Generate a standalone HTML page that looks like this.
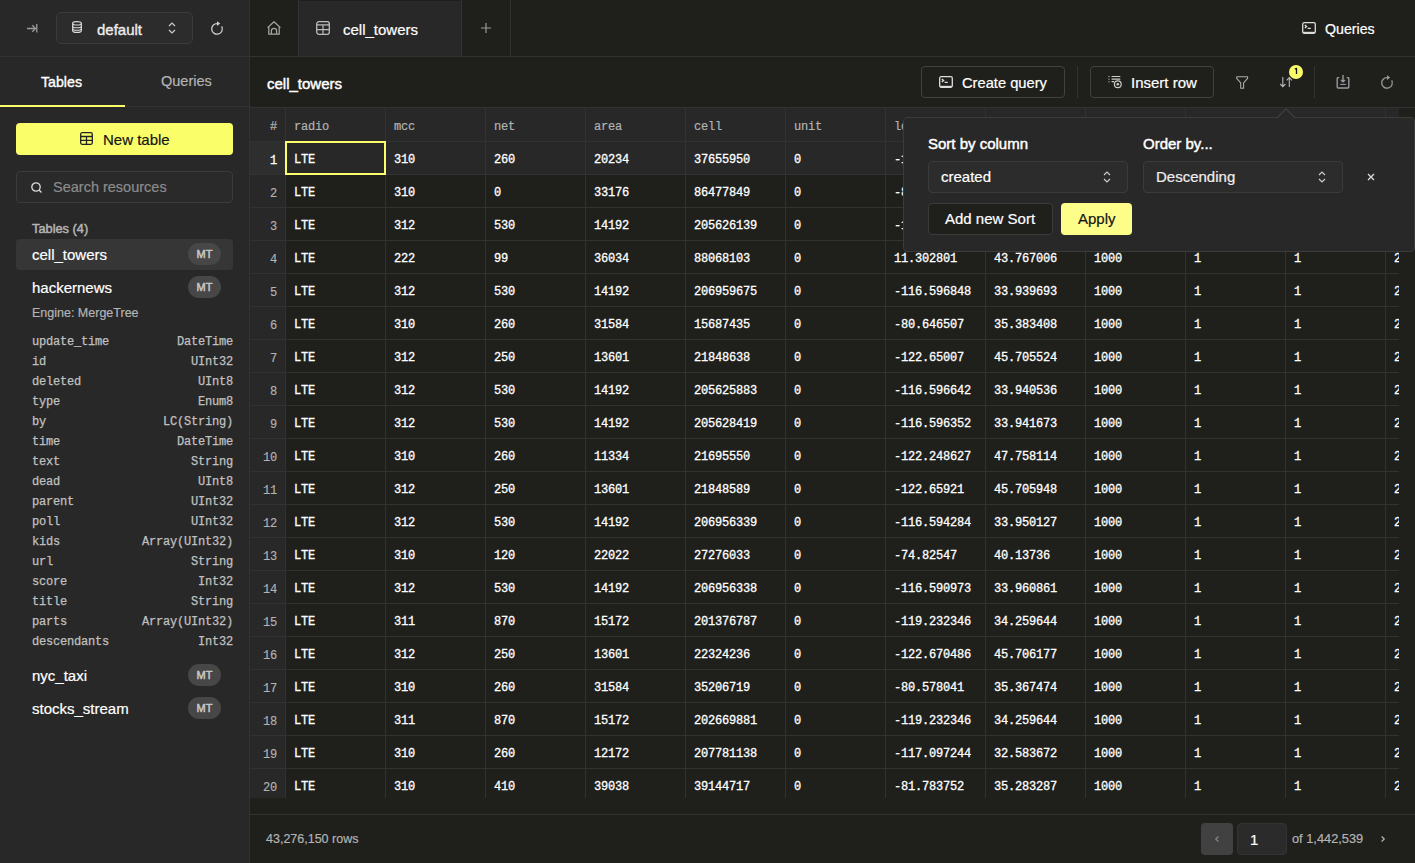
<!DOCTYPE html>
<html><head><meta charset="utf-8">
<style>
*{margin:0;padding:0;box-sizing:border-box}
html,body{width:1415px;height:863px;overflow:hidden;background:#1f1f1c;font-family:"Liberation Sans",sans-serif;color:#fff}
.abs{position:absolute}
svg{position:absolute;overflow:visible}
#side{position:absolute;left:0;top:0;width:250px;height:863px;background:#282828;border-right:1px solid #323232}
.hline{position:absolute;height:1px;background:#323232}
.vline{position:absolute;width:1px;background:#323232}
.txt{position:absolute;white-space:nowrap;line-height:1;-webkit-text-stroke:0.2px currentColor}
.txt.med{-webkit-text-stroke:0.35px currentColor}
.sel-box{position:absolute;border:1px solid #3b3b3b;border-radius:6px;background:#2c2c2c}
.btn{position:absolute;border:1px solid #414141;border-radius:4px}
.badge{position:absolute;left:188px;width:33px;height:22px;border-radius:11px;background:#474747;color:#c8c8c8;font-size:11px;text-align:center;line-height:22px;-webkit-text-stroke:0.5px #c8c8c8}
.srow{position:absolute;left:32px;width:201px;height:20px;display:flex;justify-content:space-between;font-family:"Liberation Mono",monospace;font-size:12px;color:#c0c0c0;line-height:20px;letter-spacing:-0.2px;-webkit-text-stroke:0.25px #c0c0c0}
/* grid */
#grid{position:absolute;left:250px;top:108px;width:1149px;height:690px;overflow:hidden}
.hrow{position:absolute;left:0;top:0;width:1400px;height:34px;background:#282828;border-bottom:1px solid #323232}
.row{position:absolute;left:0;width:1400px;height:33px;border-bottom:1px solid #323232}
.row.sel{background:#282828}
.hc,.c{position:absolute;top:0;width:100px;height:100%;border-left:1px solid #323232;padding-left:8px;font-family:"Liberation Mono",monospace;font-size:12px;letter-spacing:-0.2px;white-space:nowrap}
.hc{color:#b3b3b3;line-height:34px;padding-top:2px;-webkit-text-stroke:0.2px #b3b3b3}
.c{color:#fff;line-height:33px;padding-top:2px;-webkit-text-stroke:0.3px #fff}
.num{left:0;width:35px;border-left:none;padding-left:0;padding-right:8px;text-align:right;background:#282828}
.c.num{color:#b3b3b3;-webkit-text-stroke:0.15px #b3b3b3;padding-top:3px}
.sel .c.num{color:#fff;background:#2e2e2e;-webkit-text-stroke:0.3px #fff}
</style></head>
<body>
<!-- SIDEBAR -->
<div id="side">
  <div class="hline" style="left:0;top:56px;width:249px"></div>
  <!-- collapse icon -->
  <svg style="left:27px;top:24px" width="11" height="9" viewBox="0 0 11 9"><path d="M0 4.5H8.5M5.3 1.3L8.5 4.5L5.3 7.7" stroke="#9a9a9a" stroke-width="1.3" fill="none"/><path d="M9.8 0V8.5" stroke="#b0b0b0" stroke-width="1.1"/></svg>
  <div class="sel-box" style="left:56px;top:12px;width:137px;height:32px;border-radius:5px"></div>
  <svg style="left:72px;top:21px" width="10" height="12" viewBox="0 0 10 12"><path d="M0.7 2.3C0.7 1.2 2.6 0.6 5 0.6S9.3 1.2 9.3 2.3V9.7C9.3 10.8 7.4 11.4 5 11.4S0.7 10.8 0.7 9.7Z" stroke="#ddd" stroke-width="1.2" fill="none"/><path d="M0.7 2.5C0.7 3.5 2.6 4 5 4S9.3 3.5 9.3 2.5M0.7 5.2C0.7 6.2 2.6 6.7 5 6.7S9.3 6.2 9.3 5.2M0.7 7.8C0.7 8.8 2.6 9.3 5 9.3S9.3 8.8 9.3 7.8" stroke="#ddd" stroke-width="1.1" fill="none"/></svg>
  <div class="txt med" style="left:97px;top:22px;font-size:15px;color:#eee">default</div>
  <svg style="left:168px;top:22px" width="8" height="12" viewBox="0 0 8 12"><path d="M1 4L4 1L7 4M1 8L4 11L7 8" stroke="#ccc" stroke-width="1.2" fill="none"/></svg>
  <svg style="left:211px;top:21px" width="13" height="14" viewBox="0 0 13 14"><path d="M10.7 5.4A5.3 5.3 0 1 1 6.3 2.6" stroke="#ccc" stroke-width="1.3" fill="none"/><path d="M6 0.2L9.2 2.6L6 5Z" fill="#ccc"/></svg>

  <!-- tabs -->
  <div class="txt med" style="left:41px;top:75px;font-size:14.2px;color:#fff">Tables</div>
  <div class="txt" style="left:161px;top:74px;font-size:14.5px;color:#b3b3b3">Queries</div>
  <div class="hline" style="left:0;top:106px;width:249px"></div>
  <div class="abs" style="left:0;top:105px;width:125px;height:2px;background:#faff69"></div>

  <!-- new table -->
  <div class="abs" style="left:16px;top:123px;width:217px;height:32px;background:#faff69;border-radius:4px"></div>
  <svg style="left:80px;top:132px" width="13" height="13" viewBox="0 0 13 13"><rect x="0.7" y="0.7" width="11.6" height="11.6" rx="1.5" stroke="#222" stroke-width="1.3" fill="none"/><path d="M0.7 4.5H12.3M0.7 8.3H12.3M6.5 4.5V12.3" stroke="#222" stroke-width="1.3"/></svg>
  <div class="txt" style="left:103px;top:132px;font-size:15px;color:#151515">New table</div>

  <!-- search -->
  <div class="abs" style="left:16px;top:171px;width:217px;height:32px;border:1px solid #3b3b3b;border-radius:4px;background:#2a2a2a"></div>
  <svg style="left:31px;top:182px" width="11" height="11" viewBox="0 0 11 11"><circle cx="5" cy="5" r="4.2" stroke="#ddd" stroke-width="1.3" fill="none"/><path d="M8 8L10.5 10.5" stroke="#ddd" stroke-width="1.3"/></svg>
  <div class="txt" style="left:53px;top:180px;font-size:14.5px;color:#8c8c8c">Search resources</div>

  <div class="txt med" style="left:32px;top:223px;font-size:12.8px;color:#b3b3b3;-webkit-text-stroke-width:0.5px">Tables (4)</div>

  <div class="abs" style="left:16px;top:239px;width:217px;height:31px;background:#363636;border-radius:4px"></div>
  <div class="txt" style="left:32px;top:247px;font-size:15px;color:#fff">cell_towers</div>
  <div class="badge" style="top:243px">MT</div>

  <div class="txt" style="left:32px;top:280px;font-size:15px;color:#fff">hackernews</div>
  <div class="badge" style="top:276px">MT</div>
  <div class="txt" style="left:32px;top:307px;font-size:12.5px;color:#b3b3b3">Engine: MergeTree</div>

  <div class="srow" style="top:332px"><span>update_time</span><span>DateTime</span></div>
<div class="srow" style="top:352px"><span>id</span><span>UInt32</span></div>
<div class="srow" style="top:372px"><span>deleted</span><span>UInt8</span></div>
<div class="srow" style="top:392px"><span>type</span><span>Enum8</span></div>
<div class="srow" style="top:412px"><span>by</span><span>LC(String)</span></div>
<div class="srow" style="top:432px"><span>time</span><span>DateTime</span></div>
<div class="srow" style="top:452px"><span>text</span><span>String</span></div>
<div class="srow" style="top:472px"><span>dead</span><span>UInt8</span></div>
<div class="srow" style="top:492px"><span>parent</span><span>UInt32</span></div>
<div class="srow" style="top:512px"><span>poll</span><span>UInt32</span></div>
<div class="srow" style="top:532px"><span>kids</span><span>Array(UInt32)</span></div>
<div class="srow" style="top:552px"><span>url</span><span>String</span></div>
<div class="srow" style="top:572px"><span>score</span><span>Int32</span></div>
<div class="srow" style="top:592px"><span>title</span><span>String</span></div>
<div class="srow" style="top:612px"><span>parts</span><span>Array(UInt32)</span></div>
<div class="srow" style="top:632px"><span>descendants</span><span>Int32</span></div>

  <div class="txt" style="left:32px;top:668px;font-size:15px;color:#fff">nyc_taxi</div>
  <div class="badge" style="top:664px">MT</div>
  <div class="txt" style="left:32px;top:701px;font-size:15px;color:#fff">stocks_stream</div>
  <div class="badge" style="top:697px">MT</div>
</div>

<!-- TAB BAR -->
<div class="abs" style="left:299px;top:1px;width:162px;height:55px;background:#282828"></div>
<div class="vline" style="left:298px;top:0;height:56px"></div>
<div class="vline" style="left:461px;top:0;height:56px"></div>
<div class="vline" style="left:510px;top:0;height:56px"></div>
<div class="hline" style="left:250px;top:56px;width:1165px"></div>
<svg style="left:267px;top:21px" width="14" height="14" viewBox="0 0 14 14"><path d="M0.6 6.6L7 0.8L13.4 6.6M1.8 5.6V13.2H12.2V5.6M4.4 13.2V9.9A2.6 2.6 0 0 1 9.6 9.9V13.2" stroke="#a5a5a5" stroke-width="1.25" fill="none" stroke-linejoin="round"/></svg>
<svg style="left:316px;top:21px" width="14" height="14" viewBox="0 0 14 14"><rect x="0.7" y="0.7" width="12.6" height="12.6" rx="2.2" stroke="#bbb" stroke-width="1.3" fill="none"/><path d="M0.7 3.9H13.3M0.7 8.6H13.3M7 3.9V13.3" stroke="#bbb" stroke-width="1.2"/></svg>
<div class="txt" style="left:343px;top:22px;font-size:15px;color:#fff">cell_towers</div>
<svg style="left:481px;top:23px" width="10" height="10" viewBox="0 0 10 10"><path d="M5 0V10M0 5H10" stroke="#9a9a9a" stroke-width="1.2"/></svg>

<svg style="left:1302px;top:22px" width="14" height="12" viewBox="0 0 14 12"><rect x="0.7" y="0.7" width="12.6" height="10.6" rx="1.5" stroke="#ddd" stroke-width="1.3" fill="none"/><path d="M1.2 10.6H12.8" stroke="#ddd" stroke-width="1.6"/><path d="M2.8 3L4.6 4.5L2.8 6M5.6 6.3H8.8" stroke="#ddd" stroke-width="1.3" fill="none"/></svg>
<div class="txt" style="left:1325px;top:22px;font-size:14.2px;color:#fff">Queries</div>

<!-- TOOLBAR -->
<div class="txt med" style="left:267px;top:76px;font-size:15px;color:#fff;-webkit-text-stroke-width:0.45px">cell_towers</div>
<div class="btn" style="left:921px;top:66px;width:144px;height:32px"></div>
<svg style="left:939px;top:76px" width="14" height="12" viewBox="0 0 14 12"><rect x="0.7" y="0.7" width="12.6" height="10.6" rx="1.5" stroke="#ddd" stroke-width="1.3" fill="none"/><path d="M1.2 10.6H12.8" stroke="#ddd" stroke-width="1.6"/><path d="M2.8 3L4.6 4.5L2.8 6M5.6 6.3H8.8" stroke="#ddd" stroke-width="1.3" fill="none"/></svg>
<div class="txt" style="left:962px;top:76px;font-size:14.7px;color:#fff">Create query</div>
<div class="vline" style="left:1077px;top:66px;height:32px"></div>
<div class="btn" style="left:1090px;top:66px;width:124px;height:32px"></div>
<svg style="left:1108px;top:75px" width="15" height="14" viewBox="0 0 15 14"><rect x="0.4" y="1" width="1.1" height="1.1" fill="#bbb"/><rect x="0.4" y="3.6" width="1.1" height="1.1" fill="#bbb"/><rect x="0.4" y="6.2" width="1.1" height="1.1" fill="#bbb"/><path d="M3.6 1.5H12.3M3.6 4.1H12.3M3.6 6.7H6" stroke="#ccc" stroke-width="1.2"/><circle cx="9.8" cy="9.3" r="3.4" stroke="#ccc" stroke-width="1.2" fill="none"/><circle cx="9.8" cy="9.3" r="1.3" fill="#ccc"/></svg>
<div class="txt" style="left:1131px;top:75px;font-size:15px;color:#fff">Insert row</div>
<svg style="left:1236px;top:76px" width="13" height="13" viewBox="0 0 13 13"><path d="M0.7 0.7H11.6V2.3L7.6 6.8V12.2H4.7V6.8L0.7 2.3Z" stroke="#aaa" stroke-width="1.1" fill="none" stroke-linejoin="round"/></svg>
<svg style="left:1280px;top:77px" width="13" height="11" viewBox="0 0 13 11"><path d="M2.8 0V9.6M0.2 7L2.8 9.6L5.4 7M9.3 10V0.6M6.6 3.3L9.3 0.6L12 3.3" stroke="#b8b8bb" stroke-width="1.1" fill="none"/></svg>
<div class="abs" style="left:1289px;top:65px;width:14px;height:14px;border-radius:7px;background:#faff69;"></div>
<svg style="left:1294px;top:67px" width="4" height="8" viewBox="0 0 4 8"><path d="M0.8 2.3L2.5 1.4V7" stroke="#111" stroke-width="1.3" fill="none" stroke-linejoin="round"/></svg>
<div class="vline" style="left:1314px;top:66px;height:32px"></div>
<svg style="left:1336px;top:75px" width="14" height="14" viewBox="0 0 14 14"><path d="M3.3 2.6H2.2Q1.2 2.6 1.2 3.6V12Q1.2 13 2.2 13H11.8Q12.8 13 12.8 12V3.6Q12.8 2.6 11.8 2.6H10.7" stroke="#9a9a9e" stroke-width="1.4" fill="none"/><path d="M7 0V6.8M5 4.9L7 6.8L9 4.9" stroke="#9a9a9e" stroke-width="1.4" fill="none"/><path d="M4.2 9.4H9.8" stroke="#9a9a9e" stroke-width="1.1"/></svg>
<svg style="left:1381px;top:75px" width="13" height="14" viewBox="0 0 13 14"><path d="M10.7 5.4A5.3 5.3 0 1 1 6.3 2.6" stroke="#9a9a9a" stroke-width="1.3" fill="none"/><path d="M6 0.2L9.2 2.6L6 5Z" fill="#9a9a9a"/></svg>
<div class="hline" style="left:250px;top:107px;width:1165px"></div>

<!-- GRID -->
<div id="grid">
<div class="hrow">
<div class="hc num">#</div>
<div class="hc" style="left:35px">radio</div>
<div class="hc" style="left:135px">mcc</div>
<div class="hc" style="left:235px">net</div>
<div class="hc" style="left:335px">area</div>
<div class="hc" style="left:435px">cell</div>
<div class="hc" style="left:535px">unit</div>
<div class="hc" style="left:635px">lon</div>
<div class="hc" style="left:735px">lat</div>
<div class="hc" style="left:835px">range</div>
<div class="hc" style="left:935px">samples</div>
<div class="hc" style="left:1035px">changeable</div>
<div class="hc" style="left:1135px">created</div>
</div>
<div class="row sel" style="top:34px">
<div class="c num">1</div>
<div class="c" style="left:35px">LTE</div>
<div class="c" style="left:135px">310</div>
<div class="c" style="left:235px">260</div>
<div class="c" style="left:335px">20234</div>
<div class="c" style="left:435px">37655950</div>
<div class="c" style="left:535px">0</div>
<div class="c" style="left:635px">-117.129440</div>
<div class="c" style="left:735px">32.715738</div>
<div class="c" style="left:835px">1000</div>
<div class="c" style="left:935px">1</div>
<div class="c" style="left:1035px">1</div>
<div class="c" style="left:1135px">2</div>
</div>
<div class="row" style="top:67px">
<div class="c num">2</div>
<div class="c" style="left:35px">LTE</div>
<div class="c" style="left:135px">310</div>
<div class="c" style="left:235px">0</div>
<div class="c" style="left:335px">33176</div>
<div class="c" style="left:435px">86477849</div>
<div class="c" style="left:535px">0</div>
<div class="c" style="left:635px">-84.386330</div>
<div class="c" style="left:735px">33.753746</div>
<div class="c" style="left:835px">1000</div>
<div class="c" style="left:935px">1</div>
<div class="c" style="left:1035px">1</div>
<div class="c" style="left:1135px">2</div>
</div>
<div class="row" style="top:100px">
<div class="c num">3</div>
<div class="c" style="left:35px">LTE</div>
<div class="c" style="left:135px">312</div>
<div class="c" style="left:235px">530</div>
<div class="c" style="left:335px">14192</div>
<div class="c" style="left:435px">205626139</div>
<div class="c" style="left:535px">0</div>
<div class="c" style="left:635px">-116.596848</div>
<div class="c" style="left:735px">33.940536</div>
<div class="c" style="left:835px">1000</div>
<div class="c" style="left:935px">1</div>
<div class="c" style="left:1035px">1</div>
<div class="c" style="left:1135px">2</div>
</div>
<div class="row" style="top:133px">
<div class="c num">4</div>
<div class="c" style="left:35px">LTE</div>
<div class="c" style="left:135px">222</div>
<div class="c" style="left:235px">99</div>
<div class="c" style="left:335px">36034</div>
<div class="c" style="left:435px">88068103</div>
<div class="c" style="left:535px">0</div>
<div class="c" style="left:635px">11.302801</div>
<div class="c" style="left:735px">43.767006</div>
<div class="c" style="left:835px">1000</div>
<div class="c" style="left:935px">1</div>
<div class="c" style="left:1035px">1</div>
<div class="c" style="left:1135px">2</div>
</div>
<div class="row" style="top:166px">
<div class="c num">5</div>
<div class="c" style="left:35px">LTE</div>
<div class="c" style="left:135px">312</div>
<div class="c" style="left:235px">530</div>
<div class="c" style="left:335px">14192</div>
<div class="c" style="left:435px">206959675</div>
<div class="c" style="left:535px">0</div>
<div class="c" style="left:635px">-116.596848</div>
<div class="c" style="left:735px">33.939693</div>
<div class="c" style="left:835px">1000</div>
<div class="c" style="left:935px">1</div>
<div class="c" style="left:1035px">1</div>
<div class="c" style="left:1135px">2</div>
</div>
<div class="row" style="top:199px">
<div class="c num">6</div>
<div class="c" style="left:35px">LTE</div>
<div class="c" style="left:135px">310</div>
<div class="c" style="left:235px">260</div>
<div class="c" style="left:335px">31584</div>
<div class="c" style="left:435px">15687435</div>
<div class="c" style="left:535px">0</div>
<div class="c" style="left:635px">-80.646507</div>
<div class="c" style="left:735px">35.383408</div>
<div class="c" style="left:835px">1000</div>
<div class="c" style="left:935px">1</div>
<div class="c" style="left:1035px">1</div>
<div class="c" style="left:1135px">2</div>
</div>
<div class="row" style="top:232px">
<div class="c num">7</div>
<div class="c" style="left:35px">LTE</div>
<div class="c" style="left:135px">312</div>
<div class="c" style="left:235px">250</div>
<div class="c" style="left:335px">13601</div>
<div class="c" style="left:435px">21848638</div>
<div class="c" style="left:535px">0</div>
<div class="c" style="left:635px">-122.65007</div>
<div class="c" style="left:735px">45.705524</div>
<div class="c" style="left:835px">1000</div>
<div class="c" style="left:935px">1</div>
<div class="c" style="left:1035px">1</div>
<div class="c" style="left:1135px">2</div>
</div>
<div class="row" style="top:265px">
<div class="c num">8</div>
<div class="c" style="left:35px">LTE</div>
<div class="c" style="left:135px">312</div>
<div class="c" style="left:235px">530</div>
<div class="c" style="left:335px">14192</div>
<div class="c" style="left:435px">205625883</div>
<div class="c" style="left:535px">0</div>
<div class="c" style="left:635px">-116.596642</div>
<div class="c" style="left:735px">33.940536</div>
<div class="c" style="left:835px">1000</div>
<div class="c" style="left:935px">1</div>
<div class="c" style="left:1035px">1</div>
<div class="c" style="left:1135px">2</div>
</div>
<div class="row" style="top:298px">
<div class="c num">9</div>
<div class="c" style="left:35px">LTE</div>
<div class="c" style="left:135px">312</div>
<div class="c" style="left:235px">530</div>
<div class="c" style="left:335px">14192</div>
<div class="c" style="left:435px">205628419</div>
<div class="c" style="left:535px">0</div>
<div class="c" style="left:635px">-116.596352</div>
<div class="c" style="left:735px">33.941673</div>
<div class="c" style="left:835px">1000</div>
<div class="c" style="left:935px">1</div>
<div class="c" style="left:1035px">1</div>
<div class="c" style="left:1135px">2</div>
</div>
<div class="row" style="top:331px">
<div class="c num">10</div>
<div class="c" style="left:35px">LTE</div>
<div class="c" style="left:135px">310</div>
<div class="c" style="left:235px">260</div>
<div class="c" style="left:335px">11334</div>
<div class="c" style="left:435px">21695550</div>
<div class="c" style="left:535px">0</div>
<div class="c" style="left:635px">-122.248627</div>
<div class="c" style="left:735px">47.758114</div>
<div class="c" style="left:835px">1000</div>
<div class="c" style="left:935px">1</div>
<div class="c" style="left:1035px">1</div>
<div class="c" style="left:1135px">2</div>
</div>
<div class="row" style="top:364px">
<div class="c num">11</div>
<div class="c" style="left:35px">LTE</div>
<div class="c" style="left:135px">312</div>
<div class="c" style="left:235px">250</div>
<div class="c" style="left:335px">13601</div>
<div class="c" style="left:435px">21848589</div>
<div class="c" style="left:535px">0</div>
<div class="c" style="left:635px">-122.65921</div>
<div class="c" style="left:735px">45.705948</div>
<div class="c" style="left:835px">1000</div>
<div class="c" style="left:935px">1</div>
<div class="c" style="left:1035px">1</div>
<div class="c" style="left:1135px">2</div>
</div>
<div class="row" style="top:397px">
<div class="c num">12</div>
<div class="c" style="left:35px">LTE</div>
<div class="c" style="left:135px">312</div>
<div class="c" style="left:235px">530</div>
<div class="c" style="left:335px">14192</div>
<div class="c" style="left:435px">206956339</div>
<div class="c" style="left:535px">0</div>
<div class="c" style="left:635px">-116.594284</div>
<div class="c" style="left:735px">33.950127</div>
<div class="c" style="left:835px">1000</div>
<div class="c" style="left:935px">1</div>
<div class="c" style="left:1035px">1</div>
<div class="c" style="left:1135px">2</div>
</div>
<div class="row" style="top:430px">
<div class="c num">13</div>
<div class="c" style="left:35px">LTE</div>
<div class="c" style="left:135px">310</div>
<div class="c" style="left:235px">120</div>
<div class="c" style="left:335px">22022</div>
<div class="c" style="left:435px">27276033</div>
<div class="c" style="left:535px">0</div>
<div class="c" style="left:635px">-74.82547</div>
<div class="c" style="left:735px">40.13736</div>
<div class="c" style="left:835px">1000</div>
<div class="c" style="left:935px">1</div>
<div class="c" style="left:1035px">1</div>
<div class="c" style="left:1135px">2</div>
</div>
<div class="row" style="top:463px">
<div class="c num">14</div>
<div class="c" style="left:35px">LTE</div>
<div class="c" style="left:135px">312</div>
<div class="c" style="left:235px">530</div>
<div class="c" style="left:335px">14192</div>
<div class="c" style="left:435px">206956338</div>
<div class="c" style="left:535px">0</div>
<div class="c" style="left:635px">-116.590973</div>
<div class="c" style="left:735px">33.960861</div>
<div class="c" style="left:835px">1000</div>
<div class="c" style="left:935px">1</div>
<div class="c" style="left:1035px">1</div>
<div class="c" style="left:1135px">2</div>
</div>
<div class="row" style="top:496px">
<div class="c num">15</div>
<div class="c" style="left:35px">LTE</div>
<div class="c" style="left:135px">311</div>
<div class="c" style="left:235px">870</div>
<div class="c" style="left:335px">15172</div>
<div class="c" style="left:435px">201376787</div>
<div class="c" style="left:535px">0</div>
<div class="c" style="left:635px">-119.232346</div>
<div class="c" style="left:735px">34.259644</div>
<div class="c" style="left:835px">1000</div>
<div class="c" style="left:935px">1</div>
<div class="c" style="left:1035px">1</div>
<div class="c" style="left:1135px">2</div>
</div>
<div class="row" style="top:529px">
<div class="c num">16</div>
<div class="c" style="left:35px">LTE</div>
<div class="c" style="left:135px">312</div>
<div class="c" style="left:235px">250</div>
<div class="c" style="left:335px">13601</div>
<div class="c" style="left:435px">22324236</div>
<div class="c" style="left:535px">0</div>
<div class="c" style="left:635px">-122.670486</div>
<div class="c" style="left:735px">45.706177</div>
<div class="c" style="left:835px">1000</div>
<div class="c" style="left:935px">1</div>
<div class="c" style="left:1035px">1</div>
<div class="c" style="left:1135px">2</div>
</div>
<div class="row" style="top:562px">
<div class="c num">17</div>
<div class="c" style="left:35px">LTE</div>
<div class="c" style="left:135px">310</div>
<div class="c" style="left:235px">260</div>
<div class="c" style="left:335px">31584</div>
<div class="c" style="left:435px">35206719</div>
<div class="c" style="left:535px">0</div>
<div class="c" style="left:635px">-80.578041</div>
<div class="c" style="left:735px">35.367474</div>
<div class="c" style="left:835px">1000</div>
<div class="c" style="left:935px">1</div>
<div class="c" style="left:1035px">1</div>
<div class="c" style="left:1135px">2</div>
</div>
<div class="row" style="top:595px">
<div class="c num">18</div>
<div class="c" style="left:35px">LTE</div>
<div class="c" style="left:135px">311</div>
<div class="c" style="left:235px">870</div>
<div class="c" style="left:335px">15172</div>
<div class="c" style="left:435px">202669881</div>
<div class="c" style="left:535px">0</div>
<div class="c" style="left:635px">-119.232346</div>
<div class="c" style="left:735px">34.259644</div>
<div class="c" style="left:835px">1000</div>
<div class="c" style="left:935px">1</div>
<div class="c" style="left:1035px">1</div>
<div class="c" style="left:1135px">2</div>
</div>
<div class="row" style="top:628px">
<div class="c num">19</div>
<div class="c" style="left:35px">LTE</div>
<div class="c" style="left:135px">310</div>
<div class="c" style="left:235px">260</div>
<div class="c" style="left:335px">12172</div>
<div class="c" style="left:435px">207781138</div>
<div class="c" style="left:535px">0</div>
<div class="c" style="left:635px">-117.097244</div>
<div class="c" style="left:735px">32.583672</div>
<div class="c" style="left:835px">1000</div>
<div class="c" style="left:935px">1</div>
<div class="c" style="left:1035px">1</div>
<div class="c" style="left:1135px">2</div>
</div>
<div class="row" style="top:661px">
<div class="c num">20</div>
<div class="c" style="left:35px">LTE</div>
<div class="c" style="left:135px">310</div>
<div class="c" style="left:235px">410</div>
<div class="c" style="left:335px">39038</div>
<div class="c" style="left:435px">39144717</div>
<div class="c" style="left:535px">0</div>
<div class="c" style="left:635px">-81.783752</div>
<div class="c" style="left:735px">35.283287</div>
<div class="c" style="left:835px">1000</div>
<div class="c" style="left:935px">1</div>
<div class="c" style="left:1035px">1</div>
<div class="c" style="left:1135px">2</div>
</div>
</div>
<div class="abs" style="left:285px;top:141px;width:101px;height:34px;border:2px solid #faff69"></div>

<!-- FOOTER -->
<div class="hline" style="left:250px;top:814px;width:1165px"></div>
<div class="txt" style="left:266px;top:833px;font-size:12.5px;color:#b3b3b3">43,276,150 rows</div>
<div class="abs" style="left:1201px;top:823px;width:32px;height:32px;border-radius:4px;background:#414141"></div>
<svg style="left:1215px;top:836px" width="4" height="6" viewBox="0 0 4 6"><path d="M3.4 0.5L0.7 3L3.4 5.5" stroke="#888" stroke-width="1.1" fill="none"/></svg>
<div class="abs" style="left:1237px;top:823px;width:50px;height:32px;border-radius:4px;background:#2b2b2b;border:1px solid #333"></div>
<div class="txt" style="left:1250px;top:832px;font-size:15px;color:#fff">1</div>
<div class="txt" style="left:1292px;top:833px;font-size:12.8px;color:#b3b3b3">of 1,442,539</div>
<svg style="left:1381px;top:836px" width="4" height="6" viewBox="0 0 4 6"><path d="M0.6 0.5L3.3 3L0.6 5.5" stroke="#bbb" stroke-width="1.1" fill="none"/></svg>

<!-- POPOVER -->
<div class="abs" style="left:903px;top:117px;width:512px;height:135px;background:#282828;border:1px solid #3b3b3b;border-radius:4px"></div>
<svg style="left:1277px;top:108px" width="19" height="11" viewBox="0 0 19 11"><path d="M0.5 9.5L9 0.8L17.5 9.5Z" fill="#282828" stroke="#404040" stroke-width="1.1" stroke-linejoin="miter"/><rect x="1.3" y="9" width="15.4" height="2" fill="#282828"/></svg>
<div class="txt med" style="left:928px;top:136px;font-size:15px;color:#fff;-webkit-text-stroke-width:0.45px">Sort by column</div>
<div class="txt med" style="left:1143px;top:136px;font-size:15px;color:#fff;-webkit-text-stroke-width:0.45px">Order by...</div>
<div class="sel-box" style="left:928px;top:161px;width:200px;height:32px;border-radius:4px;border-color:#3b3b3b;background:#2c2c2c"></div>
<div class="txt" style="left:941px;top:169px;font-size:15px;color:#fff">created</div>
<svg style="left:1103px;top:171px" width="8" height="12" viewBox="0 0 8 12"><path d="M1 4L4 1L7 4M1 8L4 11L7 8" stroke="#ccc" stroke-width="1.2" fill="none"/></svg>
<div class="sel-box" style="left:1143px;top:161px;width:200px;height:32px;border-radius:4px;border-color:#3b3b3b;background:#2c2c2c"></div>
<div class="txt" style="left:1156px;top:169px;font-size:15px;color:#eee">Descending</div>
<svg style="left:1318px;top:171px" width="8" height="12" viewBox="0 0 8 12"><path d="M1 4L4 1L7 4M1 8L4 11L7 8" stroke="#ccc" stroke-width="1.2" fill="none"/></svg>
<svg style="left:1367px;top:173px" width="8" height="8" viewBox="0 0 8 8"><path d="M1 1L7 7M7 1L1 7" stroke="#ddd" stroke-width="1.3"/></svg>
<div class="btn" style="left:928px;top:203px;width:125px;height:32px;background:#1f1f1c;border-color:#3b3b3b"></div>
<div class="txt" style="left:945px;top:211px;font-size:15px;color:#fff">Add new Sort</div>
<div class="abs" style="left:1061px;top:203px;width:71px;height:32px;border-radius:4px;background:#fdfd8a"></div>
<div class="txt" style="left:1078px;top:211px;font-size:15px;color:#151515">Apply</div>
</body></html>
